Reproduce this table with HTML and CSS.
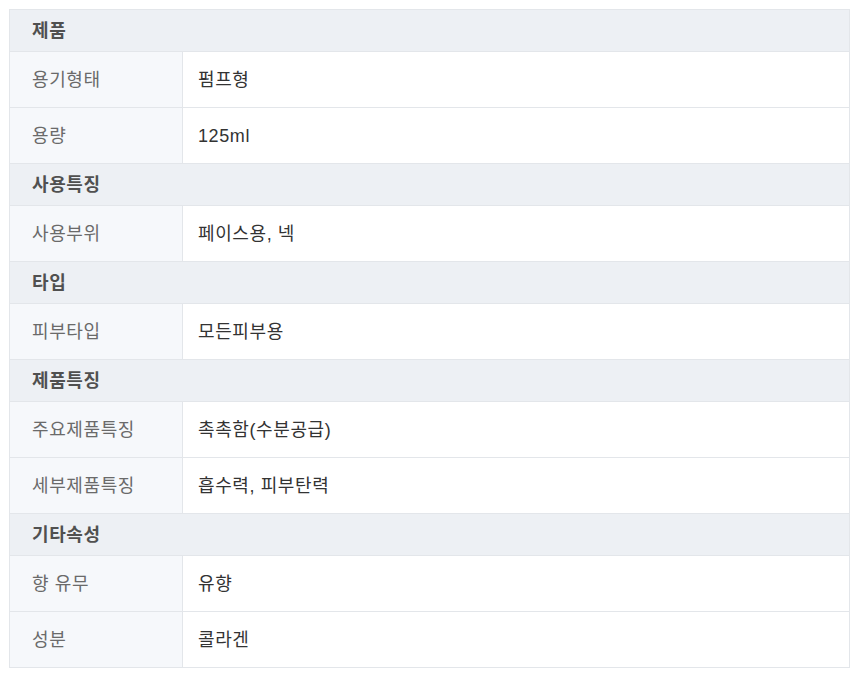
FILE: index.html
```html
<!DOCTYPE html>
<html lang="ko">
<head>
<meta charset="utf-8">
<link rel="stylesheet" href="styles.css">
</head>
<body>
<table class="spec">
  <tbody>
    <tr class="sec"><th colspan="2">제품</th></tr>
    <tr><td class="lbl">용기형태</td><td class="val">펌프형</td></tr>
    <tr><td class="lbl">용량</td><td class="val">125ml</td></tr>
    <tr class="sec"><th colspan="2">사용특징</th></tr>
    <tr><td class="lbl">사용부위</td><td class="val">페이스용, 넥</td></tr>
    <tr class="sec"><th colspan="2">타입</th></tr>
    <tr><td class="lbl">피부타입</td><td class="val">모든피부용</td></tr>
    <tr class="sec"><th colspan="2">제품특징</th></tr>
    <tr><td class="lbl">주요제품특징</td><td class="val">촉촉함(수분공급)</td></tr>
    <tr><td class="lbl">세부제품특징</td><td class="val">흡수력, 피부탄력</td></tr>
    <tr class="sec"><th colspan="2">기타속성</th></tr>
    <tr><td class="lbl">향 유무</td><td class="val">유향</td></tr>
    <tr><td class="lbl">성분</td><td class="val">콜라겐</td></tr>
  </tbody>
</table>
</body>
</html>
```
FILE: styles.css
```css
html, body {
  margin: 0;
  padding: 0;
  background: #ffffff;
}
body {
  padding: 9px 10px 9px 9px;
  font-family: "Liberation Sans", "Noto Sans CJK KR", sans-serif;
  font-size: 18px;
  letter-spacing: 0.6px;
}
.spec {
  width: 841px;
  border-collapse: collapse;
  border: 1px solid #e3e6ea;
}
.spec th,
.spec td {
  border: 1px solid #e3e6ea;
  text-align: left;
  font-weight: normal;
  padding: 0;
  line-height: 20px;
  vertical-align: middle;
}
.spec .sec th {
  height: 41px;
  background: #edf0f4;
  color: #505050;
  font-weight: bold;
  padding-left: 22px;
}
.spec .lbl {
  width: 150px;
  height: 55px;
  background: #f6f8fb;
  color: #6a6a6a;
  padding-left: 22px;
}
.spec .val {
  color: #333333;
  padding-left: 15px;
  background: #ffffff;
}
```
